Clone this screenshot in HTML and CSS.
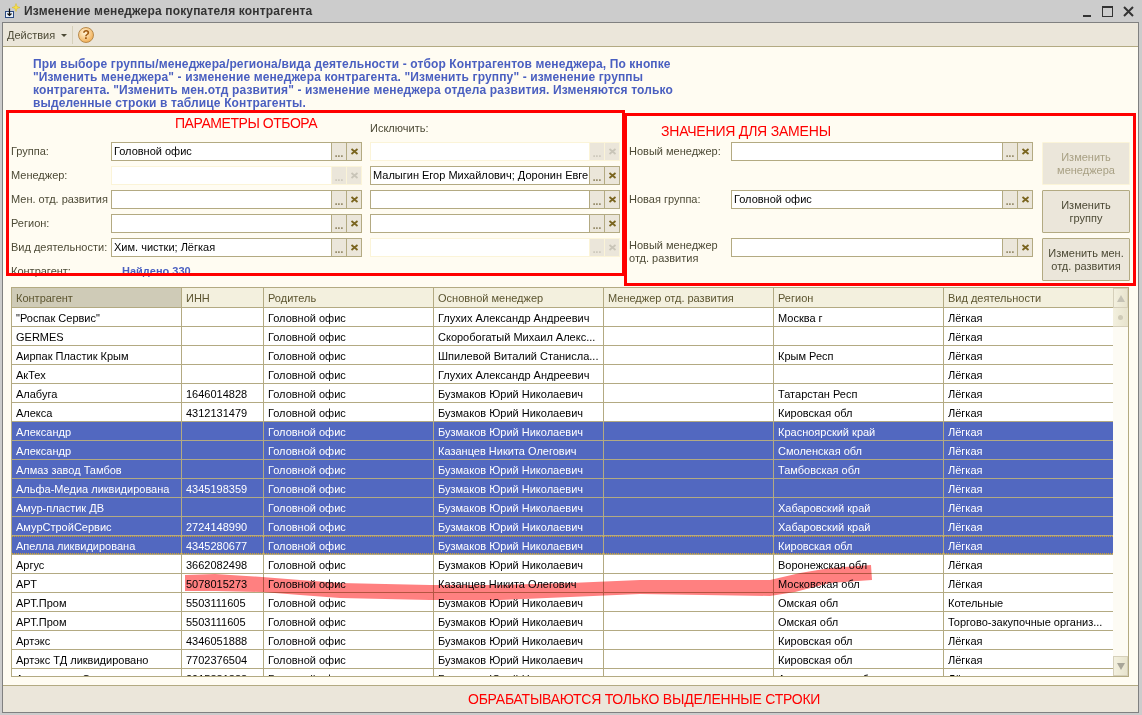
FILE: index.html
```html
<!DOCTYPE html>
<html lang="ru">
<head>
    <meta charset="UTF-8">
    <title>Изменение менеджера покупателя контрагента</title>
    <link rel="stylesheet" href="styles.css">
</head>
<body>
    <svg class="defs" width="0" height="0">
        <symbol id="cross" viewBox="0 0 9 9">
            <path d="M1.500 2 L7.500 7 M7.500 2 L1.500 7" fill="none" stroke="currentColor" stroke-width="1.800"/>
        </symbol>
    </svg>

    <div class="window">
        <div class="titlebar">
            <svg class="title-icon" width="17" height="18" viewBox="0 0 17 18">
                <path d="M12 1.500 L13 4.500 L16 5.500 L13 6.500 L12 9.500 L11 6.500 L8 5.500 L11 4.500 Z" fill="#f6e04a" stroke="#d8b820" stroke-width=".5"/>
                <rect x="1.500" y="9.500" width="8" height="6" fill="#e8f0fa" stroke="#2b4a80"/>
                <path d="M5.500 6.500 V13.500 M3.500 11.500 L5.500 13.500 L7.500 11.500" fill="none" stroke="#111" stroke-width="1.200"/>
            </svg>
            <span class="title-text">Изменение менеджера покупателя контрагента</span>
            <div class="win-buttons">
                <svg width="52" height="14" viewBox="0 0 52 14">
                    <path d="M1 11 H9" stroke="#333" stroke-width="2"/>
                    <rect x="20.500" y="1.500" width="10" height="10" fill="none" stroke="#333"/>
                    <path d="M20.500 2 H30.500" stroke="#333" stroke-width="2"/>
                    <path d="M42 2 L51 11 M51 2 L42 11" stroke="#333" stroke-width="2"/>
                </svg>
            </div>
        </div>

        <div class="frame">
            <div class="toolbar">
                <span class="menu">Действия</span>
                <span class="caret"></span>
                <span class="tool-sep"></span>
                <span class="help">?</span>
            </div>

            <div class="content">
                <p class="intro">
                    При выборе группы/менеджера/региона/вида деятельности - отбор Контрагентов менеджера, По кнопке<br>
                    "Изменить менеджера" - изменение менеджера контрагента. "Изменить группу" - изменение группы<br>
                    контрагента. "Изменить мен.отд развития" - изменение менеджера отдела развития. Изменяются только<br>
                    выделенные строки в таблице Контрагенты.
                </p>

                <div class="forms">
                    <div class="filter">
                        <span></span>
                        <span></span>
                        <span class="label">Исключить:</span>

                        <span class="label">Группа:</span>
                        <div class="field"><span class="value">Головной офис</span><span class="pick">...</span><span class="clear"><svg width="9" height="9"><use href="#cross"/></svg></span></div>
                        <div class="field off"><span class="value"></span><span class="pick">...</span><span class="clear"><svg width="9" height="9"><use href="#cross"/></svg></span></div>

                        <span class="label">Менеджер:</span>
                        <div class="field off"><span class="value"></span><span class="pick">...</span><span class="clear"><svg width="9" height="9"><use href="#cross"/></svg></span></div>
                        <div class="field"><span class="value">Малыгин Егор Михайлович; Доронин Евге</span><span class="pick">...</span><span class="clear"><svg width="9" height="9"><use href="#cross"/></svg></span></div>

                        <span class="label">Мен. отд. развития</span>
                        <div class="field"><span class="value"></span><span class="pick">...</span><span class="clear"><svg width="9" height="9"><use href="#cross"/></svg></span></div>
                        <div class="field"><span class="value"></span><span class="pick">...</span><span class="clear"><svg width="9" height="9"><use href="#cross"/></svg></span></div>

                        <span class="label">Регион:</span>
                        <div class="field"><span class="value"></span><span class="pick">...</span><span class="clear"><svg width="9" height="9"><use href="#cross"/></svg></span></div>
                        <div class="field"><span class="value"></span><span class="pick">...</span><span class="clear"><svg width="9" height="9"><use href="#cross"/></svg></span></div>

                        <span class="label">Вид деятельности:</span>
                        <div class="field"><span class="value">Хим. чистки; Лёгкая</span><span class="pick">...</span><span class="clear"><svg width="9" height="9"><use href="#cross"/></svg></span></div>
                        <div class="field off"><span class="value"></span><span class="pick">...</span><span class="clear"><svg width="9" height="9"><use href="#cross"/></svg></span></div>

                        <span class="label">Контрагент:</span>
                        <span class="found">Найдено 330</span>
                    </div>

                    <div class="replace">
                        <span class="label">Новый менеджер:</span>
                        <div class="field"><span class="value"></span><span class="pick">...</span><span class="clear"><svg width="9" height="9"><use href="#cross"/></svg></span></div>
                        <button class="btn" disabled>Изменить<br>менеджера</button>

                        <span class="label">Новая группа:</span>
                        <div class="field"><span class="value">Головной офис</span><span class="pick">...</span><span class="clear"><svg width="9" height="9"><use href="#cross"/></svg></span></div>
                        <button class="btn">Изменить<br>группу</button>

                        <span class="label two-line">Новый менеджер<br>отд. развития</span>
                        <div class="field"><span class="value"></span><span class="pick">...</span><span class="clear"><svg width="9" height="9"><use href="#cross"/></svg></span></div>
                        <button class="btn">Изменить мен.<br>отд. развития</button>
                    </div>
                </div>

                <div class="grid-box">
                    <div class="grid-scroll">
                        <table class="grid">
                            <colgroup>
                                <col class="c-name"><col class="c-inn"><col class="c-wide"><col class="c-wide"><col class="c-wide"><col class="c-wide"><col class="c-wide">
                            </colgroup>
                            <thead>
                                <tr><th class="sorted">Контрагент</th><th>ИНН</th><th>Родитель</th><th>Основной менеджер</th><th>Менеджер отд. развития</th><th>Регион</th><th>Вид деятельности</th></tr>
                            </thead>
                            <tbody>
                                <tr><td>"Роспак Сервис"</td><td></td><td>Головной офис</td><td>Глухих Александр Андреевич</td><td></td><td>Москва г</td><td>Лёгкая</td></tr>
                                <tr><td>GERMES</td><td></td><td>Головной офис</td><td>Скоробогатый Михаил Алекс...</td><td></td><td></td><td>Лёгкая</td></tr>
                                <tr><td>Аирпак Пластик Крым</td><td></td><td>Головной офис</td><td>Шпилевой Виталий Станисла...</td><td></td><td>Крым Респ</td><td>Лёгкая</td></tr>
                                <tr><td>АкТех</td><td></td><td>Головной офис</td><td>Глухих Александр Андреевич</td><td></td><td></td><td>Лёгкая</td></tr>
                                <tr><td>Алабуга</td><td>1646014828</td><td>Головной офис</td><td>Бузмаков Юрий Николаевич</td><td></td><td>Татарстан Респ</td><td>Лёгкая</td></tr>
                                <tr><td>Алекса</td><td>4312131479</td><td>Головной офис</td><td>Бузмаков Юрий Николаевич</td><td></td><td>Кировская обл</td><td>Лёгкая</td></tr>
                                <tr class="sel"><td>Александр</td><td></td><td>Головной офис</td><td>Бузмаков Юрий Николаевич</td><td></td><td>Красноярский край</td><td>Лёгкая</td></tr>
                                <tr class="sel"><td>Александр</td><td></td><td>Головной офис</td><td>Казанцев Никита Олегович</td><td></td><td>Смоленская обл</td><td>Лёгкая</td></tr>
                                <tr class="sel"><td>Алмаз завод Тамбов</td><td></td><td>Головной офис</td><td>Бузмаков Юрий Николаевич</td><td></td><td>Тамбовская обл</td><td>Лёгкая</td></tr>
                                <tr class="sel"><td>Альфа-Медиа ликвидирована</td><td>4345198359</td><td>Головной офис</td><td>Бузмаков Юрий Николаевич</td><td></td><td></td><td>Лёгкая</td></tr>
                                <tr class="sel"><td>Амур-пластик ДВ</td><td></td><td>Головной офис</td><td>Бузмаков Юрий Николаевич</td><td></td><td>Хабаровский край</td><td>Лёгкая</td></tr>
                                <tr class="sel"><td>АмурСтройСервис</td><td>2724148990</td><td>Головной офис</td><td>Бузмаков Юрий Николаевич</td><td></td><td>Хабаровский край</td><td>Лёгкая</td></tr>
                                <tr class="sel current"><td>Апелла ликвидирована</td><td>4345280677</td><td>Головной офис</td><td>Бузмаков Юрий Николаевич</td><td></td><td>Кировская обл</td><td>Лёгкая</td></tr>
                                <tr><td>Аргус</td><td>3662082498</td><td>Головной офис</td><td>Бузмаков Юрий Николаевич</td><td></td><td>Воронежская обл</td><td>Лёгкая</td></tr>
                                <tr><td>АРТ</td><td>5078015273</td><td>Головной офис</td><td>Казанцев Никита Олегович</td><td></td><td>Московская обл</td><td>Лёгкая</td></tr>
                                <tr><td>АРТ.Пром</td><td>5503111605</td><td>Головной офис</td><td>Бузмаков Юрий Николаевич</td><td></td><td>Омская обл</td><td>Котельные</td></tr>
                                <tr><td>АРТ.Пром</td><td>5503111605</td><td>Головной офис</td><td>Бузмаков Юрий Николаевич</td><td></td><td>Омская обл</td><td>Торгово-закупочные организ...</td></tr>
                                <tr><td>Артэкс</td><td>4346051888</td><td>Головной офис</td><td>Бузмаков Юрий Николаевич</td><td></td><td>Кировская обл</td><td>Лёгкая</td></tr>
                                <tr><td>Артэкс ТД ликвидировано</td><td>7702376504</td><td>Головной офис</td><td>Бузмаков Юрий Николаевич</td><td></td><td>Кировская обл</td><td>Лёгкая</td></tr>
                                <tr><td>Архангельск Сервис</td><td>2915881888</td><td>Головной офис</td><td>Бузмаков Юрий Николаевич</td><td></td><td>Архангельская обл</td><td>Лёгкая</td></tr>
                            </tbody>
                        </table>
                    </div>
                    <div class="scrollbar">
                        <div class="sb-btn"><span class="tri-up"></span></div>
                        <div class="sb-thumb"><span class="sb-grip"></span></div>
                        <div class="sb-track"></div>
                        <div class="sb-btn"><span class="tri-down"></span></div>
                    </div>
                </div>
            </div>

            <div class="footer">ОБРАБАТЫВАЮТСЯ ТОЛЬКО ВЫДЕЛЕННЫЕ СТРОКИ</div>
        </div>

        <!-- пометки поверх скриншота -->
        <div class="mark mark-filter">ПАРАМЕТРЫ ОТБОРА</div>
        <div class="mark mark-replace">ЗНАЧЕНИЯ ДЛЯ ЗАМЕНЫ</div>
        <svg class="stroke" width="1142" height="715" viewBox="0 0 1142 715">
            <path d="M185 575 L215 574 L262 577 L300 580 L340 583 L430 585 L500 585 L570 583 L640 580 L770 580 L800 573 L830 568 L871 565 L872 580 L830 583 L795 592 L770 596 L640 594 L570 597 L500 600 L430 600 L340 598 L300 595 L262 592 L215 591 L185 591 Z" fill="#ff8080"/>
        </svg>
    </div>
</body>
</html>
```

FILE: styles.css
```css
* {
    box-sizing: border-box;
}

body {
    margin: 0;
    background-color: #cccccc;
    overflow: hidden;
    font-family: "Liberation Sans", Arial, sans-serif;
    font-size: 11px;
    color: #000;
}

.defs {
    position: absolute;
}

.window {
    position: relative;
    width: 1142px;
    height: 715px;
    display: flex;
    flex-direction: column;
    background-color: #cccccc;
}

/* заголовок окна */
.titlebar {
    height: 22px;
    flex: none;
    display: flex;
    align-items: center;
    padding: 0 8px 0 4px;
}

.title-icon {
    margin-right: 3px;
}

.title-text {
    font-weight: bold;
    font-size: 12px;
    letter-spacing: .17px;
    color: #333;
}

.win-buttons {
    margin-left: auto;
    align-self: flex-start;
    margin-top: 5px;
    display: flex;
}

/* рамка формы */
.frame {
    flex: none;
    width: 1137px;
    height: 691px;
    margin-left: 2px;
    border: 1px solid #808080;
    display: flex;
    flex-direction: column;
    background-color: #fffcf2;
}

.toolbar {
    height: 24px;
    flex: none;
    display: flex;
    align-items: center;
    padding-left: 4px;
    background-color: #ebe6da;
    border-bottom: 1px solid #b3aa82;
    color: #4d4a36;
}

.caret {
    width: 0;
    height: 0;
    margin: 1px 0 0 6px;
    border-left: 3px solid transparent;
    border-right: 3px solid transparent;
    border-top: 3px solid #4d4a36;
}

.tool-sep {
    width: 1px;
    height: 18px;
    margin: 0 5px 0 5px;
    background-color: #d6d0ba;
}

.help {
    width: 16px;
    height: 16px;
    border-radius: 50%;
    background: radial-gradient(circle at 40% 35%, #fff3d6, #f2b25c 75%);
    border: 1px solid #b98a4a;
    color: #a05a10;
    font-weight: bold;
    font-size: 12px;
    line-height: 14px;
    text-align: center;
}

.content {
    flex: 1;
    min-height: 0;
}

.intro {
    margin: 0;
    padding: 11px 0 0 30px;
    font-size: 12px;
    letter-spacing: .13px;
    line-height: 13px;
    font-weight: bold;
    color: #4a5fc0;
    white-space: nowrap;
}

/* блоки отбора и замены */
.forms {
    display: flex;
    padding: 9px 0 0 8px;
    height: 177px;
}

.filter {
    display: grid;
    grid-template-columns: 100px 251px 250px;
    grid-template-rows: 18px;
    grid-auto-rows: 19px;
    row-gap: 5px;
    width: 618px;
}

.filter .field:nth-child(3n) {
    margin-left: 8px;
    width: 250px;
}

.filter > .label:nth-child(3) {
    margin-left: 8px;
}

.replace {
    display: grid;
    grid-template-columns: 102px 302px 88px;
    grid-auto-rows: 43px;
    row-gap: 5px;
    padding-top: 23px;
}

.replace .btn {
    margin-left: 9px;
    width: 88px;
}

.label {
    line-height: 19px;
    color: #4d4a36;
    white-space: nowrap;
}

.two-line {
    line-height: 13px;
    padding-top: 1px;
}

.found {
    font-weight: bold;
    color: #4a5fc0;
    line-height: 19px;
    padding-left: 11px;
}

.field {
    height: 19px;
    display: flex;
    border: 1px solid #b3aa82;
    background-color: #fff;
}

.value {
    flex: 1;
    min-width: 0;
    padding-left: 2px;
    line-height: 17px;
    white-space: nowrap;
    overflow: hidden;
}

.pick,
.clear {
    flex: none;
    background-color: #ebe6da;
    border-left: 1px solid #b3aa82;
    display: flex;
    justify-content: center;
}

.pick {
    width: 15px;
    color: #8a7f5a;
    font-weight: bold;
    line-height: 21px;
    font-size: 10px;
    overflow: hidden;
}

.clear {
    width: 15px;
    align-items: center;
    color: #7a6520;
}

.field.off {
    border-color: #fbf4d8;
}

.field.off .pick,
.field.off .clear {
    border-left-color: #fbf4d8;
    color: #c9c5b8;
}

.btn {
    height: 43px;
    padding: 0;
    border: 1px solid #b3aa82;
    border-radius: 1px;
    background-color: #ebe6da;
    font-family: inherit;
    font-size: 11px;
    line-height: 13px;
    color: #4d4a36;
}

.btn:disabled {
    border-color: #fbf4d8;
    color: #a8a084;
}

/* таблица */
.grid-box {
    display: flex;
    margin-left: 8px;
    width: 1118px;
    height: 390px;
    border-bottom: 1px solid #b3aa82;
}

.grid-scroll {
    width: 1102px;
    overflow: hidden;
}

.grid {
    table-layout: fixed;
    width: 1102px;
    border-collapse: collapse;
    font-size: 11px;
}

.c-name {
    width: 170px;
}

.c-inn {
    width: 82px;
}

.c-wide {
    width: 170px;
}

.grid th,
.grid td {
    height: 19px;
    padding: 1px 3px 0 4px;
    border: 1px solid #b3aa82;
    line-height: 16px;
    text-align: left;
    font-weight: normal;
    white-space: nowrap;
    overflow: hidden;
}

.grid th {
    height: 20px;
    background-color: #f3f0de;
    color: #5c5530;
}

.grid th.sorted {
    background-color: #cfcbb7;
}

.grid td {
    background-color: #fff;
}

.grid .sel td {
    background-color: #5268c0;
    color: #fff;
}

/* пунктир текущей строки */
.grid .current td {
    background-image:
        repeating-linear-gradient(90deg, #d0a030 0 1px, transparent 1px 2px),
        repeating-linear-gradient(90deg, #d0a030 0 1px, transparent 1px 2px);
    background-size: 100% 1px, 100% 1px;
    background-position: top, bottom;
    background-repeat: no-repeat;
}

.scrollbar {
    width: 16px;
    display: flex;
    flex-direction: column;
    border-top: 1px solid #b3aa82;
    border-right: 1px solid #b3aa82;
}

.sb-btn {
    height: 20px;
    flex: none;
    display: flex;
    align-items: center;
    justify-content: center;
    background: linear-gradient(90deg, #f3f0de, #e8e4ce);
    border: 1px solid #d6d0ba;
}

.tri-up,
.tri-down {
    width: 0;
    height: 0;
    border-left: 4px solid transparent;
    border-right: 4px solid transparent;
}

.tri-up {
    border-bottom: 7px solid #c5c2b4;
}

.tri-down {
    border-top: 7px solid #a8a598;
}

.sb-thumb {
    height: 19px;
    flex: none;
    display: flex;
    align-items: center;
    justify-content: center;
    background: linear-gradient(90deg, #f3f0de, #e8e4ce);
    border-bottom: 1px solid #d6d0ba;
}

.sb-grip {
    width: 5px;
    height: 5px;
    border-radius: 50%;
    background-color: #cfcbb7;
}

.sb-track {
    flex: 1;
    background-color: #fdfbf4;
}

.footer {
    margin-top: auto;
    height: 27px;
    flex: none;
    padding-left: 465px;
    background-color: #ebe6da;
    border-top: 1px solid #b3aa82;
    color: #f00;
    font-size: 14px;
    letter-spacing: -.23px;
    line-height: 26px;
}

/* красные рамки и штрих лежат поверх формы */
.mark {
    position: absolute;
    border: 3px solid #f00;
    color: #f00;
    font-size: 14px;
    line-height: 16px;
    pointer-events: none;
}

.mark-filter {
    left: 6px;
    top: 110px;
    width: 619px;
    height: 166px;
    padding: 2px 0 0 166px;
    letter-spacing: -.45px;
}

.mark-replace {
    left: 624px;
    top: 113px;
    width: 512px;
    height: 173px;
    padding: 7px 0 0 34px;
    letter-spacing: -.2px;
}

.stroke {
    position: absolute;
    left: 0;
    top: 0;
    mix-blend-mode: multiply;
    filter: blur(.5px);
    pointer-events: none;
}
```
